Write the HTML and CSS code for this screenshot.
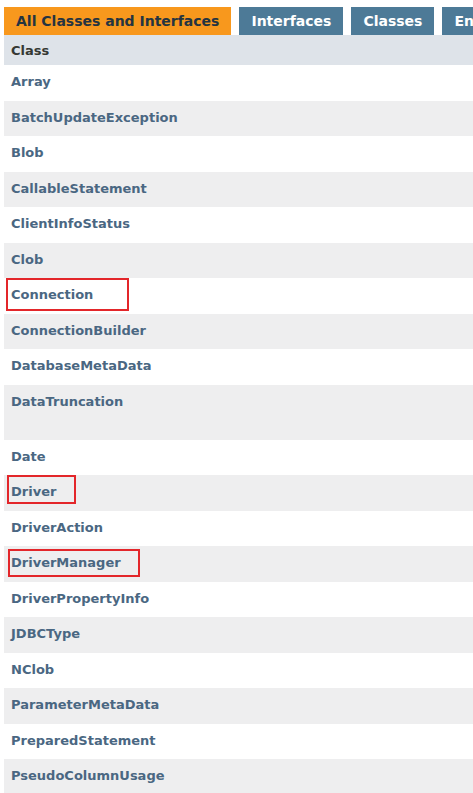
FILE: index.html
```html
<!DOCTYPE html>
<html>
<head>
<meta charset="utf-8">
<link rel="stylesheet" href="styles.css">
</head>
<body>
<div class="page">
  <div class="tabs">
    <span class="tab active">All Classes and Interfaces</span>
    <span class="tab">Interfaces</span>
    <span class="tab">Classes</span>
    <span class="tab">Enums</span>
    <span class="tab">Exceptions</span>
  </div>
  <div class="table">
    <div class="head">Class</div>
    <div class="row"><a>Array</a></div>
    <div class="row alt"><a>BatchUpdateException</a></div>
    <div class="row"><a>Blob</a></div>
    <div class="row alt"><a>CallableStatement</a></div>
    <div class="row"><a>ClientInfoStatus</a></div>
    <div class="row alt"><a>Clob</a></div>
    <div class="row"><a>Connection</a><span class="mark mark-conn"></span></div>
    <div class="row alt"><a>ConnectionBuilder</a></div>
    <div class="row"><a>DatabaseMetaData</a></div>
    <div class="row alt tall"><a>DataTruncation</a></div>
    <div class="row"><a>Date</a></div>
    <div class="row alt"><a>Driver</a><span class="mark mark-driver"></span></div>
    <div class="row"><a>DriverAction</a></div>
    <div class="row alt"><a>DriverManager</a><span class="mark mark-dm"></span></div>
    <div class="row"><a>DriverPropertyInfo</a></div>
    <div class="row alt"><a>JDBCType</a></div>
    <div class="row"><a>NClob</a></div>
    <div class="row alt"><a>ParameterMetaData</a></div>
    <div class="row"><a>PreparedStatement</a></div>
    <div class="row alt"><a>PseudoColumnUsage</a></div>
  </div>
</div>
</body>
</html>
```
FILE: styles.css
```css
html, body {
  margin: 0;
  padding: 0;
  background: #ffffff;
}
body {
  font-family: "DejaVu Sans", Arial, sans-serif;
  font-size: 14px;
  overflow: hidden;
}
.page {
  padding: 7px 0 0 4px;
  width: 700px;
}
.tabs {
  display: flex;
  gap: 8px;
  white-space: nowrap;
}
.tab {
  display: block;
  height: 28px;
  line-height: 28px;
  padding: 0 12px;
  background: #4d7a97;
  color: #ffffff;
  font-weight: bold;
}
.tab.active {
  background: #f8981d;
  color: #253441;
}
.table {
  display: flex;
  flex-direction: column;
}
.head {
  height: 30px;
  line-height: 31px;
  padding-left: 7px;
  background: #dee3e9;
  color: #353833;
  font-weight: bold;
  font-size: 13px;
}
.row {
  position: relative;
  height: 35.5px;
  padding: 7px 0 0 7px;
  box-sizing: border-box;
  line-height: 19.5px;
  font-size: 13px;
  background: #ffffff;
}
.row.alt {
  background: #eeeeef;
}
.row.tall {
  height: 55px;
}
.row a {
  color: #4a6782;
  font-weight: bold;
  text-decoration: none;
}
.mark {
  position: absolute;
  border: 2px solid #e3262a;
  box-sizing: border-box;
}
.mark-conn {
  top: 0;
  left: 2px;
  width: 123px;
  height: 33px;
}
.mark-driver {
  top: 0;
  left: 3px;
  width: 69px;
  height: 29px;
}
.mark-dm {
  top: 3px;
  left: 4px;
  width: 132px;
  height: 28px;
}
```
